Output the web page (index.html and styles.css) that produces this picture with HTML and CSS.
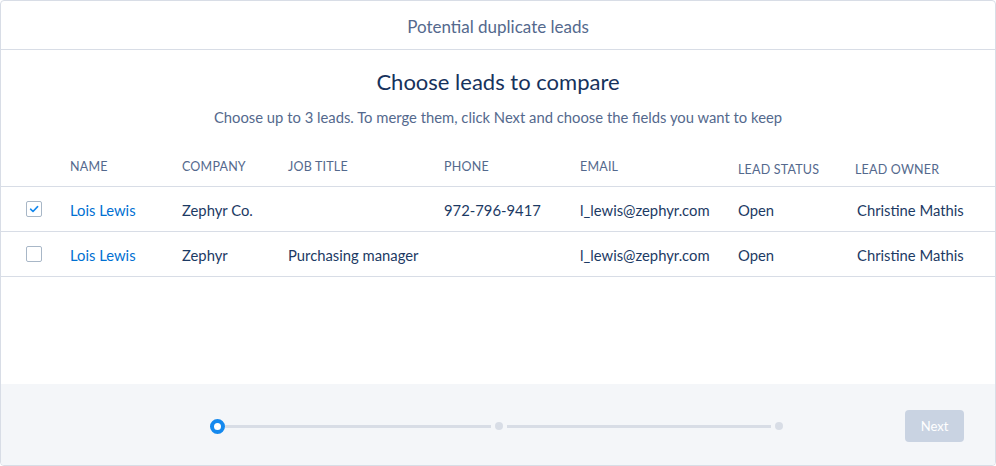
FILE: index.html
```html
<!DOCTYPE html>
<html>
<head>
<meta charset="utf-8">
<link rel="stylesheet" href="styles.css">
</head>
<body>
<div class="modal">
  <div class="modal-header">Potential duplicate leads</div>
  <div class="modal-body">
    <h2 class="heading">Choose leads to compare</h2>
    <p class="subtitle">Choose up to 3 leads. To merge them, click Next and choose the fields you want to keep</p>
    <div class="table">
      <div class="row head">
        <div class="cell"></div>
        <div class="cell">NAME</div>
        <div class="cell">COMPANY</div>
        <div class="cell">JOB TITLE</div>
        <div class="cell">PHONE</div>
        <div class="cell">EMAIL</div>
        <div class="cell low">LEAD STATUS</div>
        <div class="cell low">LEAD OWNER</div>
      </div>
      <div class="row">
        <div class="cell"><span class="checkbox checked"><svg viewBox="0 0 16 16" width="16" height="16"><path d="M4.6 8.2 L7 10.5 L11.6 5.6" fill="none" stroke="#1589ee" stroke-width="1.6" stroke-linecap="round" stroke-linejoin="round"/></svg></span></div>
        <div class="cell link">Lois Lewis</div>
        <div class="cell">Zephyr Co.</div>
        <div class="cell"></div>
        <div class="cell">972-796-9417</div>
        <div class="cell">l_lewis@zephyr.com</div>
        <div class="cell">Open</div>
        <div class="cell owner">Christine Mathis</div>
      </div>
      <div class="row">
        <div class="cell"><span class="checkbox"></span></div>
        <div class="cell link">Lois Lewis</div>
        <div class="cell">Zephyr</div>
        <div class="cell">Purchasing manager</div>
        <div class="cell"></div>
        <div class="cell">l_lewis@zephyr.com</div>
        <div class="cell">Open</div>
        <div class="cell owner">Christine Mathis</div>
      </div>
    </div>
  </div>
  <div class="modal-footer">
    <div class="progress">
      <span class="ring"></span>
      <span class="track first"></span>
      <span class="dot"></span>
      <span class="track second"></span>
      <span class="dot"></span>
    </div>
    <button class="next">Next</button>
  </div>
</div>
</body>
</html>
```

FILE: styles.css
```css
* { box-sizing: border-box; }
html, body { margin: 0; padding: 0; background: #fff; }
body { font-family: "Lato", "Open Sans", sans-serif; color: #16325c; }

.modal {
  width: 996px;
  height: 466px;
  border: 1px solid #d8dde6;
  border-radius: 4px;
  display: flex;
  flex-direction: column;
  overflow: hidden;
}

.modal-header {
  height: 49px;
  border-bottom: 1px solid #d8dde6;
  display: flex;
  align-items: center;
  justify-content: center;
  font-size: 17px;
  color: #54698d;
  padding-top: 2px;
}

.modal-body {
  flex: 1;
  display: flex;
  flex-direction: column;
}

.heading {
  margin: 19px 0 0;
  font-size: 22px;
  line-height: 26px;
  font-weight: 400;
  text-align: center;
  color: #16325c;
}

.subtitle {
  margin: 12px 0 0;
  font-size: 14.8px;
  line-height: 20px;
  text-align: center;
  color: #54698d;
}

.table { margin-top: 19px; }

.row {
  display: grid;
  grid-template-columns: 69px 112px 106px 156px 136px 158px 117px 140px;
  height: 45px;
  border-bottom: 1px solid #d8dde6;
  align-items: center;
  font-size: 14.8px;
  color: #1c3a64;
}

.row .cell { padding-top: 2px; white-space: nowrap; }

.row.head {
  height: 41px;
  font-size: 12.5px;
  color: #54698d;
  letter-spacing: 0.2px;
}

.row.head .cell { padding-top: 0; }
.row.head .cell.low { padding-top: 6px; }

.cell.link { color: #0070d2; }
.cell.owner { padding-left: 2px; }

.checkbox {
  display: block;
  width: 16px;
  height: 16px;
  margin-left: 25px;
  margin-top: -2px;
  border: 1px solid #a8b7c7;
  border-radius: 2px;
  position: relative;
}
.checkbox svg { position: absolute; left: -1px; top: -1px; }

.modal-footer {
  height: 81px;
  background: #f4f6f9;
  display: flex;
  align-items: center;
  padding: 3px 31px 0 209px;
}

.progress {
  display: flex;
  align-items: center;
}

.ring {
  width: 15px;
  height: 15px;
  border: 4px solid #1589ee;
  border-radius: 50%;
  background: #fff;
}

.track {
  height: 3px;
  background: #d8dde6;
}
.track.first { width: 266px; margin-right: 4px; }
.track.second { width: 264px; margin: 0 4px; }

.dot {
  width: 8px;
  height: 8px;
  border-radius: 50%;
  background: #d8dde6;
}

.next {
  margin-left: auto;
  width: 59px;
  height: 32px;
  border: none;
  border-radius: 4px;
  background: #c9d3e2;
  color: #fff;
  font-family: inherit;
  font-size: 13px;
  padding: 0;
}
```
